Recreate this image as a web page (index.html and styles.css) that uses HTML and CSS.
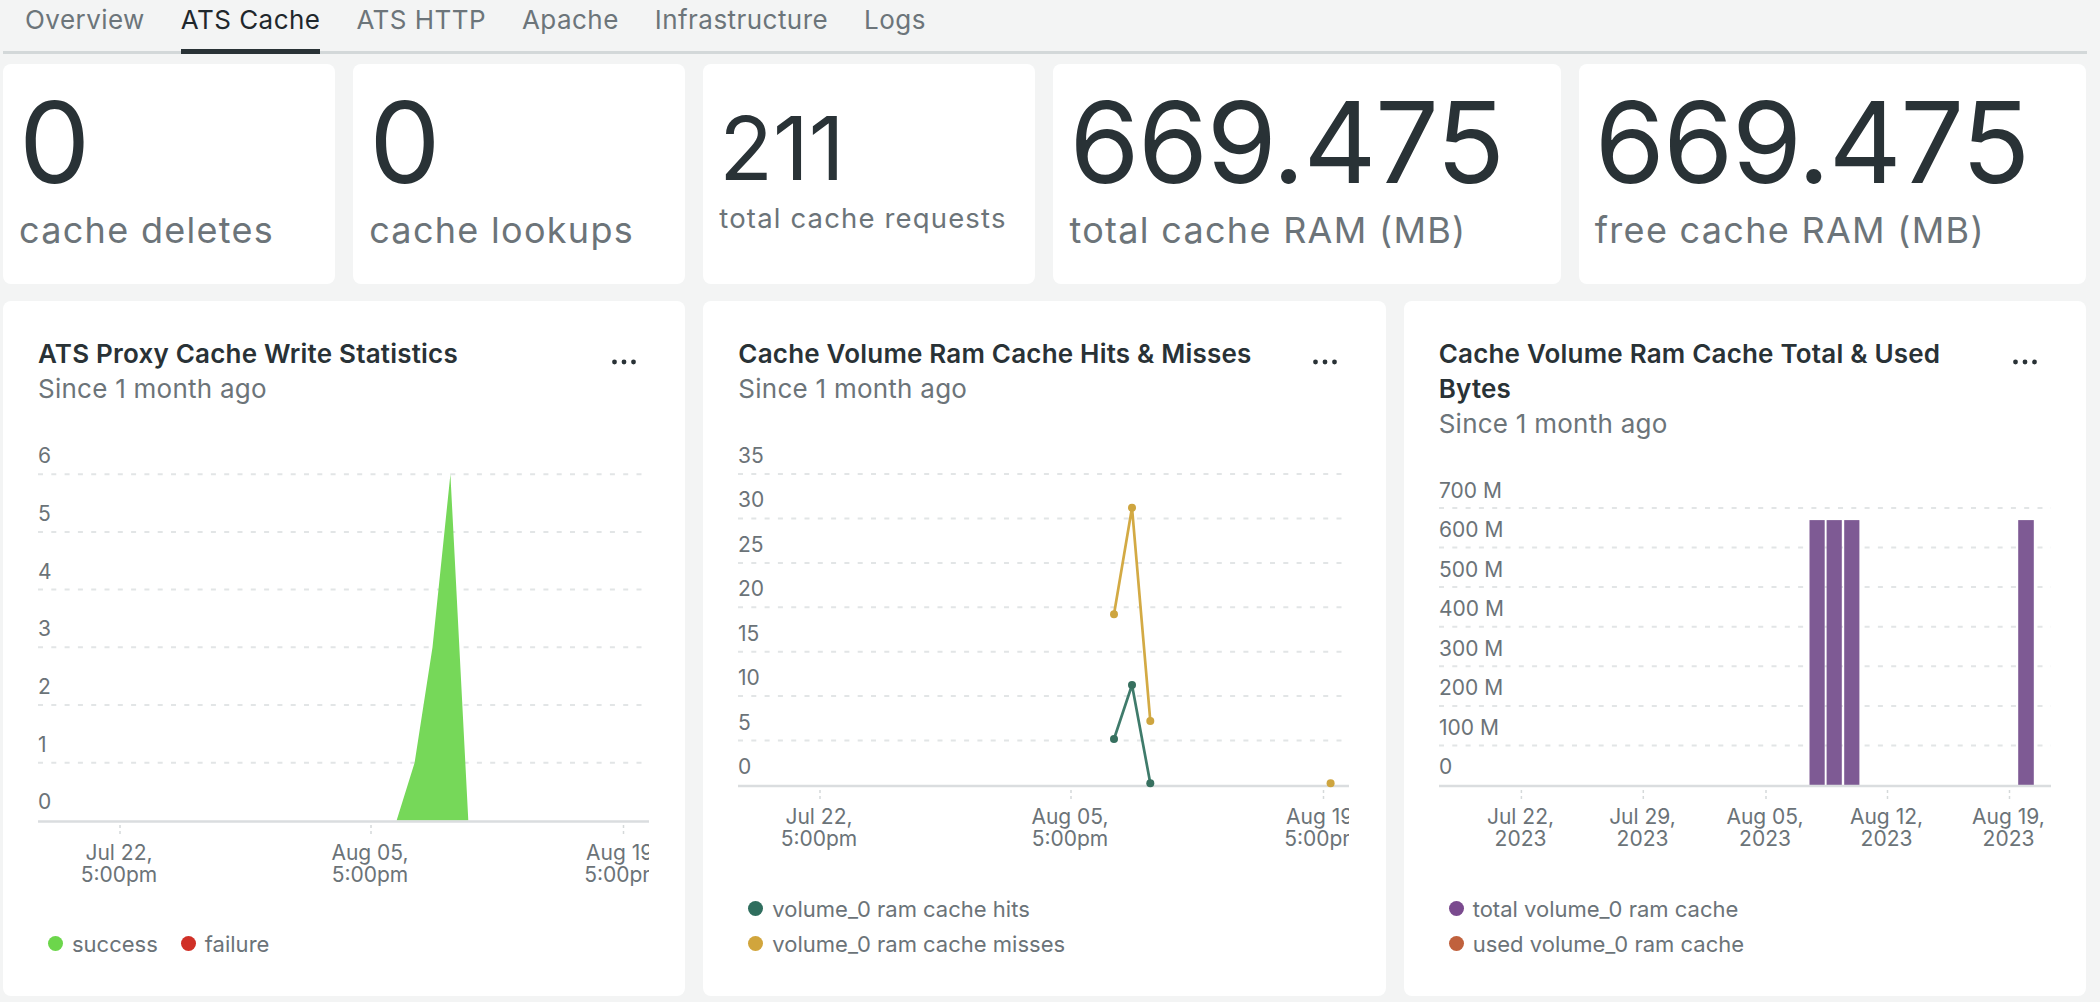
FILE: index.html
```html
<!DOCTYPE html>
<html lang="en">
<head>
<meta charset="utf-8">
<title>ATS Cache</title>
<link rel="stylesheet" href="styles.css">
</head>
<body>
<div class="page">
  <nav class="tabs">
    <a class="tab">Overview</a>
    <a class="tab active">ATS Cache</a>
    <a class="tab">ATS HTTP</a>
    <a class="tab">Apache</a>
    <a class="tab">Infrastructure</a>
    <a class="tab">Logs</a>
  </nav>

  <main class="grid">
    <section class="stat span2">
      <div class="value">0</div>
      <div class="label">cache deletes</div>
    </section>
    <section class="stat span2">
      <div class="value">0</div>
      <div class="label">cache lookups</div>
    </section>
    <section class="stat span2 small">
      <div class="value">211</div>
      <div class="label">total cache requests</div>
    </section>
    <section class="stat span3">
      <div class="value">669.475</div>
      <div class="label">total cache RAM (MB)</div>
    </section>
    <section class="stat span3">
      <div class="value">669.475</div>
      <div class="label">free cache RAM (MB)</div>
    </section>

    <!-- Chart 1 -->
    <section class="chart span4">
      <header class="chart-head">
        <div class="titles">
          <h2>ATS Proxy Cache Write Statistics</h2>
          <p>Since 1 month ago</p>
        </div>
        <button class="menu" aria-label="More"><svg width="24" height="6" viewBox="0 0 24 6"><circle cx="2.5" cy="3" r="2.4"/><circle cx="12" cy="3" r="2.4"/><circle cx="21.5" cy="3" r="2.4"/></svg></button>
      </header>
      <div class="plot">
        <svg class="axis" width="611" height="520" viewBox="0 0 611 520">
          <g class="gridlines">
            <line x1="0" x2="611" y1="68.2" y2="68.2"/>
            <line x1="0" x2="611" y1="125.9" y2="125.9"/>
            <line x1="0" x2="611" y1="183.6" y2="183.6"/>
            <line x1="0" x2="611" y1="241.3" y2="241.3"/>
            <line x1="0" x2="611" y1="299" y2="299"/>
            <line x1="0" x2="611" y1="356.7" y2="356.7"/>
          </g>
          <g class="ylabels">
            <text x="0" y="57">6</text>
            <text x="0" y="115">5</text>
            <text x="0" y="172.6">4</text>
            <text x="0" y="230.3">3</text>
            <text x="0" y="288">2</text>
            <text x="0" y="345.7">1</text>
            <text x="0" y="403.4">0</text>
          </g>
          <polygon class="area-success" points="358.6,414.4 376.6,356.7 394.5,241.3 412.4,68.2 430.3,414.4"/>
          <line class="baseline" x1="0" x2="611" y1="415.4" y2="415.4"/>
          <g class="ticks">
            <line x1="82" x2="82" y1="419" y2="430"/>
            <line x1="333" x2="333" y1="419" y2="430"/>
            <line x1="585.5" x2="585.5" y1="419" y2="430"/>
          </g>
          <g class="xlabels">
            <text x="81" y="453.5">Jul 22,</text><text x="81" y="475.5">5:00pm</text>
            <text x="332" y="453.5">Aug 05,</text><text x="332" y="475.5">5:00pm</text>
            <text x="584.5" y="453.5">Aug 19,</text><text x="584.5" y="475.5">5:00pm</text>
          </g>
        </svg>
      </div>
      <ul class="legend row">
        <li><span class="dot c-success"></span>success</li>
        <li><span class="dot c-failure"></span>failure</li>
      </ul>
    </section>

    <!-- Chart 2 -->
    <section class="chart span4">
      <header class="chart-head">
        <div class="titles">
          <h2>Cache Volume Ram Cache Hits &amp; Misses</h2>
          <p>Since 1 month ago</p>
        </div>
        <button class="menu" aria-label="More"><svg width="24" height="6" viewBox="0 0 24 6"><circle cx="2.5" cy="3" r="2.4"/><circle cx="12" cy="3" r="2.4"/><circle cx="21.5" cy="3" r="2.4"/></svg></button>
      </header>
      <div class="plot">
        <svg class="axis" width="611" height="485" viewBox="0 0 611 485">
          <g class="gridlines">
            <line x1="0" x2="611" y1="68" y2="68"/>
            <line x1="0" x2="611" y1="112.4" y2="112.4"/>
            <line x1="0" x2="611" y1="156.9" y2="156.9"/>
            <line x1="0" x2="611" y1="201.3" y2="201.3"/>
            <line x1="0" x2="611" y1="245.7" y2="245.7"/>
            <line x1="0" x2="611" y1="290.1" y2="290.1"/>
            <line x1="0" x2="611" y1="334.6" y2="334.6"/>
          </g>
          <g class="ylabels">
            <text x="0" y="57">35</text>
            <text x="0" y="101.4">30</text>
            <text x="0" y="145.9">25</text>
            <text x="0" y="190.3">20</text>
            <text x="0" y="234.7">15</text>
            <text x="0" y="279.1">10</text>
            <text x="0" y="323.6">5</text>
            <text x="0" y="368">0</text>
          </g>
          <line class="baseline" x1="0" x2="611" y1="380" y2="380"/>
          <g class="ticks">
            <line x1="82" x2="82" y1="384" y2="395"/>
            <line x1="333" x2="333" y1="384" y2="395"/>
            <line x1="585.5" x2="585.5" y1="384" y2="395"/>
          </g>
          <polyline class="ln misses" points="376,208.3 394,101.7 412.3,315"/>
          <polyline class="ln hits" points="376,333 394,279 412.3,377.3"/>
          <g class="pt-misses">
            <circle cx="376" cy="208.3" r="4"/>
            <circle cx="394" cy="101.7" r="4"/>
            <circle cx="412.3" cy="315" r="4"/>
            <circle cx="592.6" cy="377.3" r="4"/>
          </g>
          <g class="pt-hits">
            <circle cx="376" cy="333" r="4"/>
            <circle cx="394" cy="279" r="4"/>
            <circle cx="412.3" cy="377.3" r="4"/>
          </g>
          <g class="xlabels">
            <text x="81" y="418">Jul 22,</text><text x="81" y="440">5:00pm</text>
            <text x="332" y="418">Aug 05,</text><text x="332" y="440">5:00pm</text>
            <text x="584.5" y="418">Aug 19,</text><text x="584.5" y="440">5:00pm</text>
          </g>
        </svg>
      </div>
      <ul class="legend col">
        <li><span class="dot c-hits"></span>volume_0 ram cache hits</li>
        <li><span class="dot c-misses"></span>volume_0 ram cache misses</li>
      </ul>
    </section>

    <!-- Chart 3 -->
    <section class="chart span4">
      <header class="chart-head">
        <div class="titles">
          <h2>Cache Volume Ram Cache Total &amp; Used Bytes</h2>
          <p>Since 1 month ago</p>
        </div>
        <button class="menu" aria-label="More"><svg width="24" height="6" viewBox="0 0 24 6"><circle cx="2.5" cy="3" r="2.4"/><circle cx="12" cy="3" r="2.4"/><circle cx="21.5" cy="3" r="2.4"/></svg></button>
      </header>
      <div class="plot">
        <svg class="axis" width="612" height="450" viewBox="0 0 612 450">
          <g class="gridlines">
            <line x1="0" x2="612" y1="67" y2="67"/>
            <line x1="0" x2="612" y1="106.6" y2="106.6"/>
            <line x1="0" x2="612" y1="146.1" y2="146.1"/>
            <line x1="0" x2="612" y1="185.7" y2="185.7"/>
            <line x1="0" x2="612" y1="225.3" y2="225.3"/>
            <line x1="0" x2="612" y1="264.9" y2="264.9"/>
            <line x1="0" x2="612" y1="304.4" y2="304.4"/>
          </g>
          <g class="ylabels">
            <text x="0" y="56.5">700 M</text>
            <text x="0" y="96">600 M</text>
            <text x="0" y="135.5">500 M</text>
            <text x="0" y="175">400 M</text>
            <text x="0" y="214.7">300 M</text>
            <text x="0" y="254.3">200 M</text>
            <text x="0" y="293.8">100 M</text>
            <text x="0" y="333.3">0</text>
          </g>
          <g class="bars">
            <rect x="370.5" y="79.1" width="15.2" height="264.9"/>
            <rect x="387.6" y="79.1" width="15.2" height="264.9"/>
            <rect x="405.2" y="79.1" width="15.2" height="264.9"/>
            <rect x="579.2" y="79.1" width="15.6" height="264.9"/>
          </g>
          <line class="baseline" x1="0" x2="612" y1="345" y2="345"/>
          <g class="ticks">
            <line x1="82.4" x2="82.4" y1="349" y2="360"/>
            <line x1="204.3" x2="204.3" y1="349" y2="360"/>
            <line x1="327" x2="327" y1="349" y2="360"/>
            <line x1="448.5" x2="448.5" y1="349" y2="360"/>
            <line x1="570.5" x2="570.5" y1="349" y2="360"/>
          </g>
          <g class="xlabels">
            <text x="81.5" y="383">Jul 22,</text><text x="81.5" y="405">2023</text>
            <text x="203.5" y="383">Jul 29,</text><text x="203.5" y="405">2023</text>
            <text x="326" y="383">Aug 05,</text><text x="326" y="405">2023</text>
            <text x="447.5" y="383">Aug 12,</text><text x="447.5" y="405">2023</text>
            <text x="569.5" y="383">Aug 19,</text><text x="569.5" y="405">2023</text>
          </g>
        </svg>
      </div>
      <ul class="legend col">
        <li><span class="dot c-total"></span>total volume_0 ram cache</li>
        <li><span class="dot c-used"></span>used volume_0 ram cache</li>
      </ul>
    </section>
  </main>
</div>
</body>
</html>
```

FILE: styles.css
```css
* { box-sizing: border-box; }

html, body {
  margin: 0;
  padding: 0;
  background: #f3f4f4;
}

body {
  font-family: Inter, "Noto Sans", "Liberation Sans", sans-serif;
  color: #293236;
  width: 2100px;
  height: 1002px;
  overflow: hidden;
}

.page {
  padding-left: 3px;
}

/* ---------- Tabs ---------- */
.tabs {
  display: flex;
  gap: 36px;
  width: 2084px;
  height: 54px;
  padding-left: 22px;
  border-bottom: 3px solid #d3d8d9;
}

.tab {
  position: relative;
  font-size: 26px;
  letter-spacing: 0.45px;
  line-height: 30px;
  padding-top: 5px;
  color: #6c757a;
  text-decoration: none;
  cursor: pointer;
}

.tab.active {
  color: #1f272c;
}

.tab.active::after {
  content: "";
  position: absolute;
  left: 0;
  right: 0;
  bottom: -3px;
  height: 5px;
  background: #293236;
}

/* ---------- Grid ---------- */
.grid {
  display: grid;
  grid-template-columns: repeat(12, 1fr);
  grid-template-rows: 220px 695px;
  column-gap: 18px;
  row-gap: 17px;
  width: 2083px;
  margin-top: 10px;
}

.span2 { grid-column: span 2; }
.span3 { grid-column: span 3; }
.span4 { grid-column: span 4; }

/* ---------- Stat cards ---------- */
.stat {
  background: #fff;
  border-radius: 8px;
  display: flex;
  flex-direction: column;
  justify-content: center;
  gap: 10px;
  padding: 0 16px 10px;
  overflow: hidden;
}

.stat .value {
  font-size: 113px;
  letter-spacing: -1.5px;
  line-height: 1;
  color: #293236;
  white-space: nowrap;
}

.stat .label {
  font-size: 36px;
  letter-spacing: 0.036em;
  line-height: 1.2;
  color: #6c7479;
  white-space: nowrap;
}

.stat.small .value { font-size: 88px; letter-spacing: 0; }
.stat.small .label { font-size: 27.5px; letter-spacing: 0.042em; }

/* ---------- Chart cards ---------- */
.chart {
  background: #fff;
  border-radius: 8px;
  padding: 35px;
  display: flex;
  flex-direction: column;
  overflow: hidden;
}

.chart-head {
  display: flex;
  align-items: flex-start;
}

.titles {
  flex: 1;
  min-width: 0;
}

.titles h2 {
  margin: 0;
  font-size: 26px;
  letter-spacing: 0.2px;
  font-weight: 600;
  line-height: 35px;
  color: #293236;
}

.titles p {
  margin: 0;
  font-size: 26px;
  letter-spacing: 0.25px;
  line-height: 35px;
  color: #6c7479;
}

.menu {
  flex: none;
  height: 35px;
  margin: 0 14px 0 20px;
  padding: 0 0 6px;
  border: 0;
  background: none;
  display: flex;
  align-items: flex-end;
  cursor: pointer;
}

.menu svg { display: block; fill: #293236; }

.plot {
  flex: 1;
  min-height: 0;
  overflow: hidden;
}

.plot svg { display: block; }

.axis text {
  font-family: Inter, "Noto Sans", sans-serif;
  font-size: 21px;
  fill: #6b7378;
}

.xlabels text { text-anchor: middle; }

.gridlines line {
  stroke: #e2e5e6;
  stroke-width: 2;
  stroke-dasharray: 5 8.3;
}

.baseline {
  stroke: #dadddf;
  stroke-width: 2.5;
}

.ticks line {
  stroke: #d5d9da;
  stroke-width: 1.5;
  stroke-dasharray: 3 3;
}

.area-success { fill: #76d859; }

.ln {
  fill: none;
  stroke-width: 2.7;
  stroke-linejoin: round;
}
.ln.misses { stroke: #d3aa44; }
.ln.hits { stroke: #3f7b6b; }
.pt-misses circle { fill: #cea53f; }
.pt-hits circle { fill: #37705f; }

.bars rect { fill: #7e5a94; }

/* ---------- Legend ---------- */
.legend {
  list-style: none;
  margin: 0;
  padding: 0;
  font-size: 22px;
  color: #6b7378;
}

.legend.row {
  display: flex;
  gap: 13px;
}

.legend.col {
  display: flex;
  flex-direction: column;
}

.legend li {
  display: flex;
  align-items: center;
  height: 35px;
  padding-left: 10px;
  gap: 9px;
}

.dot {
  width: 15px;
  height: 15px;
  border-radius: 50%;
  flex: none;
}

.c-success { background: #6cd64b; }
.c-failure { background: #d03027; }
.c-hits { background: #2f6e5e; }
.c-misses { background: #d1a53c; }
.c-total { background: #7a4a8e; }
.c-used { background: #c0613d; }
```
